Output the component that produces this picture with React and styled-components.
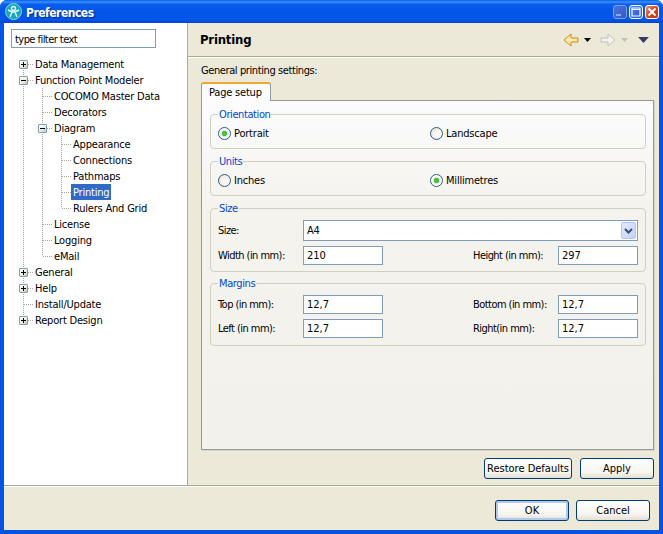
import React from 'react'
import styled, {createGlobalStyle} from 'styled-components'

const GlobalStyle = createGlobalStyle`
  html, body {
    margin: 0;
    padding: 0;
    background: #fff;
  }
  body {
    font-family: "DejaVu Sans Condensed", "DejaVu Sans", "Liberation Sans", sans-serif;
    font-stretch: condensed;
    font-size: 11px;
    letter-spacing: -0.2px;
    color: #000;
  }
`

const Window = styled.div`
  width: 663px;
  height: 534px;
  box-sizing: border-box;
  display: flex;
  flex-direction: column;
  background: #0553e4;
  border-radius: 7px 7px 0 0;
  overflow: hidden;
`

const TitleBar = styled.div`
  height: 23px;
  flex: none;
  display: flex;
  align-items: center;
  padding: 0 4px 0 5px;
  background: linear-gradient(to bottom, #0a5ae8 0, #3a93ff 2px, #0a5fee 4px, #0255e6 12px, #0256ea 19px, #0346d2 23px);
`

const TitleText = styled.div`
  flex: 1;
  margin-left: 4px;
  padding-top: 2px;
  font-size: 12px;
  font-weight: 700;
  letter-spacing: -0.5px;
  color: #fff;
  text-shadow: 1px 1px 1px #0a2a90;
`

const WinButtons = styled.div`
  display: flex;
  gap: 2px;
`

const WinButton = styled.div`
  width: 14px;
  height: 14px;
  box-sizing: border-box;
  border: 1px solid ${props => props.$disabled ? '#7c9fe8' : '#fff'};
  border-radius: 3px;
  display: flex;
  align-items: center;
  justify-content: center;
  background: ${props => props.$close
    ? 'linear-gradient(135deg, #e8957a, #d8431c 50%, #c0300f)'
    : props.$disabled
      ? 'linear-gradient(135deg, #4a74dc, #2f58c8)'
      : 'linear-gradient(135deg, #4f86f0, #1f55dc)'};
`

const Frame = styled.div`
  flex: 1;
  display: flex;
  flex-direction: column;
  margin: 0 4px 4px;
  background: #ece9d8;
  min-height: 0;
`

const Main = styled.div`
  height: 463px;
  flex: none;
  display: flex;
  border-bottom: 1px solid #aca899;
  box-sizing: border-box;
`

const Sidebar = styled.div`
  width: 184px;
  flex: none;
  background: #fff;
  border-right: 1px solid #aca899;
  box-sizing: border-box;
  padding: 6px 0 0 7px;
`

const FilterInput = styled.input`
  display: block;
  width: 145px;
  height: 19px;
  box-sizing: border-box;
  border: 1px solid #7f9db9;
  padding: 1px 3px 0;
  font: inherit;
  letter-spacing: -0.55px;
  color: #000;
  outline: none;
`

const Tree = styled.div`
  margin: 8px 0 0 3px;
  display: flex;
  flex-direction: column;
`

const TreeRow = styled.div`
  display: flex;
  height: 16px;
`

const dotV = '#a8a89a'

const GuideCell = styled.div`
  width: 19px;
  height: 16px;
  flex: none;
  display: flex;
  align-items: center;
  justify-content: center;
  background-repeat: no-repeat;
  background-image:
    ${props => props.$kind === 'blank' || props.$kind === 'pipe'
    ? 'linear-gradient(transparent, transparent)'
    : `repeating-linear-gradient(to right, ${dotV} 0 1px, transparent 1px 2px)`},
    ${props => props.$kind === 'blank'
    ? 'linear-gradient(transparent, transparent)'
    : `repeating-linear-gradient(to bottom, ${dotV} 0 1px, transparent 1px 2px)`};
  background-size: 9px 1px, 1px ${props => props.$kind === 'pipe' || props.$kind === 'tee' ? '16px' : '8px'};
  background-position:
    10px 8px,
    9px ${props => props.$kind === 'first' ? '8px' : '0'};
`

const Expander = styled.div`
  width: 9px;
  height: 9px;
  box-sizing: border-box;
  margin-left: 0;
  border: 1px solid #7f9db9;
  border-radius: 1px;
  background: linear-gradient(135deg, #fff, #f0efe6 50%, #c8c4b0);
  display: flex;
`

const TreeLabel = styled.div`
  height: 16px;
  line-height: 18px;
  padding: 0 2px;
  white-space: nowrap;
  color: ${props => props.$selected ? '#fff' : '#000'};
  background: ${props => props.$selected ? '#316ac5' : 'transparent'};
`

const Content = styled.div`
  flex: 1;
  min-width: 0;
  display: flex;
  flex-direction: column;
`

const PageHeader = styled.div`
  height: 34px;
  flex: none;
  box-sizing: border-box;
  display: flex;
  align-items: center;
  padding: 0 10px 0 12px;
  border-bottom: 1px solid #aca899;
  box-shadow: 0 1px 0 #fff;
`

const PageTitle = styled.div`
  flex: 1;
  font-size: 13px;
  font-weight: 700;
`

const Toolbar = styled.div`
  display: flex;
  align-items: center;
`

const PageBody = styled.div`
  flex: 1;
  display: flex;
  flex-direction: column;
  padding: 7px 5px 6px 13px;
  min-height: 0;
`

const Intro = styled.div`
  height: 13px;
  line-height: 13px;
  margin-bottom: 5px;
  letter-spacing: -0.4px;
`

const TabStrip = styled.div`
  display: flex;
  height: 19px;
  flex: none;
  margin-bottom: -1px;
`

const Tab = styled.div`
  width: 70px;
  box-sizing: border-box;
  border: 1px solid #919b9c;
  border-top: 2px solid #f0a830;
  border-bottom: none;
  border-radius: 3px 3px 0 0;
  background: #fcfcfe;
  padding-left: 7px;
  line-height: 17px;
  z-index: 1;
`

const TabPane = styled.div`
  height: 350px;
  flex: none;
  box-sizing: border-box;
  border: 1px solid #919b9c;
  background: linear-gradient(to bottom, #fcfcfe, #f4f3ee 30%, #f2f1ec);
  padding: 7px 7px 0 8px;
  box-shadow: 1px 1px 0 #d8d5c4;
`

const Group = styled.fieldset`
  margin: 0 0 ${props => props.$gap || 6}px;
  padding: 0 7px 5px;
  min-width: 0;
  box-sizing: border-box;
  height: ${props => props.$height}px;
  border: 1px solid #d0d0bf;
  border-radius: 4px;
`

const Legend = styled.legend`
  color: #0046d5;
  padding: 0 1px;
  margin-left: 0;
  line-height: 13px;
  letter-spacing: -0.4px;
`

const RadioGrid = styled.div`
  display: grid;
  grid-template-columns: 212px 1fr;
  margin-top: 4px;
`

const RadioItem = styled.div`
  display: flex;
  align-items: center;
  gap: 3px;
  height: 16px;
`

const RadioDot = styled.span`
  width: 13px;
  height: 13px;
  box-sizing: border-box;
  border: 1px solid #2f5a88;
  border-radius: 50%;
  background: ${props => props.$checked
    ? 'radial-gradient(circle, #3fc23f 0, #3fc23f 2.4px, #e9e9e0 3px, #fff 5px)'
    : 'radial-gradient(circle at 60% 60%, #fff 0, #f2f1ea 50%, #d8d6ca 100%)'};
`

const FieldGrid = styled.div`
  display: grid;
  grid-template-columns: 85px 80px 1fr 85px 80px;
  row-gap: 5px;
  align-items: center;
  margin-top: ${props => props.$top}px;
`

const FieldLabel = styled.label`
  white-space: nowrap;
  letter-spacing: -0.55px;
  grid-column: ${props => props.$col || 'auto'};
`

const TextField = styled.input`
  width: 80px;
  height: 19px;
  box-sizing: border-box;
  border: 1px solid #7f9db9;
  padding: 0 3px;
  font: inherit;
  color: #000;
  background: #fff;
  outline: none;
  grid-column: ${props => props.$col || 'auto'};
`

const Combo = styled.div`
  grid-column: 2 / 6;
  height: 21px;
  box-sizing: border-box;
  border: 1px solid #7f9db9;
  background: #fff;
  padding: 0 1px 0 3px;
  display: flex;
  align-items: center;
  justify-content: space-between;
`

const ComboArrow = styled.div`
  width: 15px;
  height: 17px;
  box-sizing: border-box;
  border: 1px solid #b4c6f0;
  border-radius: 2px;
  background: linear-gradient(135deg, #e2eafe, #c0d0f8);
  display: flex;
  align-items: center;
  justify-content: center;
`

const PageButtons = styled.div`
  margin-top: 8px;
  display: flex;
  justify-content: flex-end;
  gap: 8px;
`

const PushButton = styled.button`
  width: ${props => props.$width}px;
  height: 21px;
  box-sizing: border-box;
  padding: 0;
  border: 1px solid #003c74;
  border-radius: 3px;
  font: inherit;
  color: #000;
  background: linear-gradient(to bottom, #fff, #f6f5ef 70%, #e2dfd2);
  box-shadow: ${props => props.$default ? 'inset 0 0 0 2px #b2c8ee' : 'none'};
`

const Footer = styled.div`
  flex: 1;
  display: flex;
  justify-content: flex-end;
  gap: 7px;
  padding: 13px 9px 0 0;
  border-top: 1px solid #fff;
`

const EclipseIcon = () => (
  <svg width="17" height="17" viewBox="0 0 17 17">
    <circle cx="8.5" cy="8.5" r="8" fill="#1aa6b8" stroke="#7fd8e0" />
    <circle cx="8.5" cy="5.5" r="2" fill="none" stroke="#e8f8fa" strokeWidth="1.4" />
    <path d="M3 7l4 2h3l4-2M7 9l-2 5M10 9l2 5" fill="none" stroke="#e8f8fa" strokeWidth="1.4" />
  </svg>
)

const ExpanderGlyph = ({open}) => (
  <svg width="7" height="7" viewBox="0 0 7 7">
    <path d={open ? 'M1 3.5h5' : 'M1 3.5h5M3.5 1v5'} stroke="#000" strokeWidth="1" />
  </svg>
)

const BackArrow = ({disabled}) => (
  <svg width="16" height="14" viewBox="0 0 16 14">
    <path
      d={disabled ? 'M1 5h7V1l7 6-7 6V9H1z' : 'M15 5H8V1L1 7l7 6V9h7z'}
      fill={disabled ? '#f4f3ee' : '#ffe9a8'}
      stroke={disabled ? '#c0c0b8' : '#c88a18'}
      strokeWidth="1"
    />
  </svg>
)

const DropDown = ({color, size = 5, marginLeft, marginRight}) => (
  <svg width={size * 2 - 1} height={size} viewBox="0 0 9 5" style={{marginLeft, marginRight}}>
    <path d="M0 0h9L4.5 5z" fill={color} />
  </svg>
)

const treeRows = [
  {label: 'Data Management', cells: [{kind: 'first', exp: 'plus'}]},
  {label: 'Function Point Modeler', cells: [{kind: 'tee', exp: 'minus'}]},
  {label: 'COCOMO Master Data', cells: [{kind: 'pipe'}, {kind: 'tee'}]},
  {label: 'Decorators', cells: [{kind: 'pipe'}, {kind: 'tee'}]},
  {label: 'Diagram', cells: [{kind: 'pipe'}, {kind: 'tee', exp: 'minus'}]},
  {label: 'Appearance', cells: [{kind: 'pipe'}, {kind: 'pipe'}, {kind: 'tee'}]},
  {label: 'Connections', cells: [{kind: 'pipe'}, {kind: 'pipe'}, {kind: 'tee'}]},
  {label: 'Pathmaps', cells: [{kind: 'pipe'}, {kind: 'pipe'}, {kind: 'tee'}]},
  {label: 'Printing', selected: true, cells: [{kind: 'pipe'}, {kind: 'pipe'}, {kind: 'tee'}]},
  {label: 'Rulers And Grid', cells: [{kind: 'pipe'}, {kind: 'pipe'}, {kind: 'elbow'}]},
  {label: 'License', cells: [{kind: 'pipe'}, {kind: 'tee'}]},
  {label: 'Logging', cells: [{kind: 'pipe'}, {kind: 'tee'}]},
  {label: 'eMail', cells: [{kind: 'pipe'}, {kind: 'elbow'}]},
  {label: 'General', cells: [{kind: 'tee', exp: 'plus'}]},
  {label: 'Help', cells: [{kind: 'tee', exp: 'plus'}]},
  {label: 'Install/Update', cells: [{kind: 'tee'}]},
  {label: 'Report Design', cells: [{kind: 'elbow', exp: 'plus'}]}
]

const App = () => {
  return (
    <Window>
      <GlobalStyle />
      <TitleBar>
        <EclipseIcon />
        <TitleText>Preferences</TitleText>
        <WinButtons>
          <WinButton $disabled>
            <svg width="8" height="8" viewBox="0 0 8 8"><path d="M0 6h5v2H0z" fill="#8fa8e8" /></svg>
          </WinButton>
          <WinButton>
            <svg width="10" height="10" viewBox="0 0 10 10"><path d="M1 1h8v8H1z M1 2.5h8" fill="none" stroke="#fff" strokeWidth="1.2" /></svg>
          </WinButton>
          <WinButton $close>
            <svg width="10" height="10" viewBox="0 0 10 10"><path d="M1.5 1.5l7 7M8.5 1.5l-7 7" stroke="#fff" strokeWidth="2" /></svg>
          </WinButton>
        </WinButtons>
      </TitleBar>
      <Frame>
        <Main>
          <Sidebar>
            <FilterInput readOnly value="type filter text" />
            <Tree>
              {treeRows.map(row => (
                <TreeRow key={row.label}>
                  {row.cells.map((cell, i) => (
                    <GuideCell key={i} $kind={cell.kind}>
                      {cell.exp && (
                        <Expander>
                          <ExpanderGlyph open={cell.exp === 'minus'} />
                        </Expander>
                      )}
                    </GuideCell>
                  ))}
                  <TreeLabel $selected={row.selected}>{row.label}</TreeLabel>
                </TreeRow>
              ))}
            </Tree>
          </Sidebar>
          <Content>
            <PageHeader>
              <PageTitle>Printing</PageTitle>
              <Toolbar>
                <BackArrow />
                <DropDown color="#000" marginLeft={5} marginRight={9} size={4} />
                <BackArrow disabled />
                <DropDown color="#c0c0b8" marginLeft={5} marginRight={10} size={4} />
                <DropDown color="#3a3a6a" size={6} />
              </Toolbar>
            </PageHeader>
            <PageBody>
              <Intro>General printing settings:</Intro>
              <TabStrip>
                <Tab>Page setup</Tab>
              </TabStrip>
              <TabPane>
                <Group $height={41}>
                  <Legend>Orientation</Legend>
                  <RadioGrid>
                    <RadioItem><RadioDot $checked />Portrait</RadioItem>
                    <RadioItem><RadioDot />Landscape</RadioItem>
                  </RadioGrid>
                </Group>
                <Group $height={41}>
                  <Legend>Units</Legend>
                  <RadioGrid>
                    <RadioItem><RadioDot />Inches</RadioItem>
                    <RadioItem><RadioDot $checked />Millimetres</RadioItem>
                  </RadioGrid>
                </Group>
                <Group $height={70} $gap={5}>
                  <Legend>Size</Legend>
                  <FieldGrid $top={5}>
                    <FieldLabel>Size:</FieldLabel>
                    <Combo>
                      A4
                      <ComboArrow>
                        <svg width="9" height="6" viewBox="0 0 9 6"><path d="M1 1l3.5 3.5L8 1" fill="none" stroke="#3a4f78" strokeWidth="2" /></svg>
                      </ComboArrow>
                    </Combo>
                    <FieldLabel>Width (in mm):</FieldLabel>
                    <TextField readOnly value="210" />
                    <FieldLabel $col="4">Height (in mm):</FieldLabel>
                    <TextField readOnly value="297" />
                  </FieldGrid>
                </Group>
                <Group $height={69}>
                  <Legend>Margins</Legend>
                  <FieldGrid $top={5}>
                    <FieldLabel>Top (in mm):</FieldLabel>
                    <TextField readOnly value="12,7" />
                    <FieldLabel $col="4">Bottom (in mm):</FieldLabel>
                    <TextField readOnly value="12,7" />
                    <FieldLabel>Left (in mm):</FieldLabel>
                    <TextField readOnly value="12,7" />
                    <FieldLabel $col="4">Right(in mm):</FieldLabel>
                    <TextField readOnly value="12,7" />
                  </FieldGrid>
                </Group>
              </TabPane>
              <PageButtons>
                <PushButton $width={88}>Restore Defaults</PushButton>
                <PushButton $width={74}>Apply</PushButton>
              </PageButtons>
            </PageBody>
          </Content>
        </Main>
        <Footer>
          <PushButton $width={74} $default>OK</PushButton>
          <PushButton $width={74}>Cancel</PushButton>
        </Footer>
      </Frame>
    </Window>
  )
}

export default App
